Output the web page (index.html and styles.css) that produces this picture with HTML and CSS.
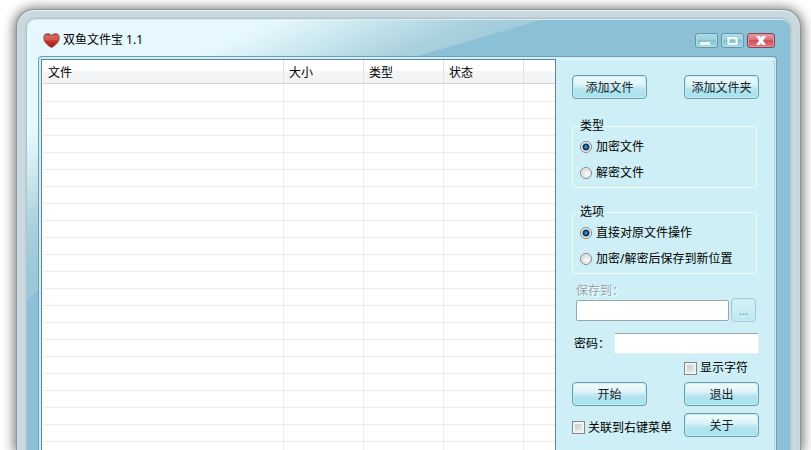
FILE: index.html
```html
<!DOCTYPE html>
<html lang="zh-CN">
  <head>
    <meta charset="UTF-8" />
    <meta name="viewport" content="width=device-width, initial-scale=1.0" />
    <title>双鱼文件宝 1.1</title>
    <link rel="stylesheet" href="styles.css">
  </head>
  <body>
    <div class="window">
      <div class="window-inner">
        <!-- 标题栏 -->
        <div class="title-bar">
          <svg class="logo" viewBox="0 0 17 15">
            <defs>
              <linearGradient id="heart" x1="0" y1="0" x2="0" y2="1">
                <stop offset="0" stop-color="#a04a48" />
                <stop offset="0.2" stop-color="#d0625c" />
                <stop offset="0.5" stop-color="#cf3a33" />
                <stop offset="1" stop-color="#8f1a18" />
              </linearGradient>
            </defs>
            <path d="M8.5 14.700C5.500 12.900.6 9.700.6 4.700.6 2 2 .5 4.500.5c1.800 0 3.200.7 4 1.600.8-.9 2.200-1.600 4-1.600 2.500 0 3.900 1.500 3.900 4.200 0 5-4.900 8.200-7.900 10z" fill="url(#heart)" stroke="#9b5a58" stroke-width=".6" />
            <path d="M2.500 4.500h12M2.500 6.500h12" stroke="#e9908a" stroke-width=".7" stroke-dasharray="1 1" />
          </svg>
          <span class="title">双鱼文件宝 1.1</span>
          <div class="window-buttons">
            <button type="button" aria-label="最小化">
              <svg viewBox="0 0 21 13"><path d="M4 8h10v3H4z" fill="#f4fbfc" /></svg>
            </button>
            <button type="button" aria-label="最大化">
              <svg viewBox="0 0 21 13"><path d="M6.500 4h8v6h-8z" fill="none" stroke="#f4fbfc" stroke-width="2" /></svg>
            </button>
            <button type="button" class="close" aria-label="关闭">
              <svg viewBox="0 0 26 13"><path d="M8 2h4l1 2 1-2h4l-3 4.500 3 4.500h-4l-1-2-1 2H8l3-4.500z" fill="#fff" /></svg>
            </button>
          </div>
        </div>

        <div class="content">
          <!-- 文件列表 -->
          <div class="file-list">
            <table>
              <thead>
                <tr>
                  <th class="col-file">文件</th>
                  <th class="col">大小</th>
                  <th class="col">类型</th>
                  <th class="col">状态</th>
                  <th></th>
                </tr>
              </thead>
              <tbody>
                <tr><td></td><td></td><td></td><td></td><td></td></tr>
                <tr><td></td><td></td><td></td><td></td><td></td></tr>
                <tr><td></td><td></td><td></td><td></td><td></td></tr>
                <tr><td></td><td></td><td></td><td></td><td></td></tr>
                <tr><td></td><td></td><td></td><td></td><td></td></tr>
                <tr><td></td><td></td><td></td><td></td><td></td></tr>
                <tr><td></td><td></td><td></td><td></td><td></td></tr>
                <tr><td></td><td></td><td></td><td></td><td></td></tr>
                <tr><td></td><td></td><td></td><td></td><td></td></tr>
                <tr><td></td><td></td><td></td><td></td><td></td></tr>
                <tr><td></td><td></td><td></td><td></td><td></td></tr>
                <tr><td></td><td></td><td></td><td></td><td></td></tr>
                <tr><td></td><td></td><td></td><td></td><td></td></tr>
                <tr><td></td><td></td><td></td><td></td><td></td></tr>
                <tr><td></td><td></td><td></td><td></td><td></td></tr>
                <tr><td></td><td></td><td></td><td></td><td></td></tr>
                <tr><td></td><td></td><td></td><td></td><td></td></tr>
                <tr><td></td><td></td><td></td><td></td><td></td></tr>
                <tr><td></td><td></td><td></td><td></td><td></td></tr>
                <tr><td></td><td></td><td></td><td></td><td></td></tr>
                <tr><td></td><td></td><td></td><td></td><td></td></tr>
                <tr><td></td><td></td><td></td><td></td><td></td></tr>
              </tbody>
            </table>
          </div>

          <!-- 操作面板 -->
          <form class="panel">
            <div class="row">
              <button type="button" class="btn">添加文件</button>
              <button type="button" class="btn">添加文件夹</button>
            </div>

            <fieldset class="group group-type">
              <legend>类型</legend>
              <label class="option"><input type="radio" name="type" checked />加密文件</label>
              <label class="option"><input type="radio" name="type" />解密文件</label>
            </fieldset>

            <fieldset class="group">
              <legend>选项</legend>
              <label class="option"><input type="radio" name="target" checked />直接对原文件操作</label>
              <label class="option"><input type="radio" name="target" />加密/解密后保存到新位置</label>
            </fieldset>

            <div class="save">
              <label for="save-path">保存到：</label>
              <div class="save-row">
                <input type="text" id="save-path" disabled />
                <button type="button" class="btn btn-browse" disabled>...</button>
              </div>
            </div>

            <div class="password">
              <label for="password">密码：</label>
              <input type="password" id="password" />
            </div>

            <label class="check show-chars"><input type="checkbox" />显示字符</label>

            <div class="row">
              <button type="button" class="btn">开始</button>
              <button type="button" class="btn">退出</button>
            </div>
            <div class="row row-last">
              <label class="check"><input type="checkbox" />关联到右键菜单</label>
              <button type="button" class="btn">关于</button>
            </div>
          </form>
        </div>
      </div>
    </div>
  </body>
</html>
```

FILE: styles.css
```css
* {
  box-sizing: border-box;
}
body {
  display: flex;
  height: 100vh;
  margin: 0;
  padding: 9px 10px 0 16px;
  overflow: hidden;
  background: #fff;
  color: #000;
  font-family: "Noto Sans", "Noto Sans CJK SC", sans-serif;
  font-size: 12px;
  line-height: 18px;
}
button,
input {
  margin: 0;
  font: inherit;
}

/* 窗口外框 */
.window {
  display: flex;
  flex: 1;
  min-width: 0;
  padding: 9px 10px 0;
  border: 1px solid #8b9899;
  border-bottom: 0;
  border-radius: 18px 18px 0 0;
  background: #cad8e0;
  box-shadow: inset 0 1px 1px #eaf5f8, 0 1px 12px 2px rgba(0, 0, 0, 0.55);
}
.window-inner {
  position: relative;
  display: flex;
  flex: 1;
  flex-direction: column;
  min-width: 0;
  padding: 0 13px 0 11px;
  border-top: 1px solid #d9edf3;
  border-radius: 8px 8px 0 0;
  background: #8bc0d6;
  box-shadow: 0 0 2px 1px #a9bac2;
}
/* 左上角的高光 */
.window-inner::before {
  content: "";
  position: absolute;
  inset: 0;
  border-radius: 8px 0 0 0;
  background: linear-gradient(155deg, #e6f8fd 105px, #c6e5ed 150px, #a9d0dd 190px, #9bc9da 230px);
  clip-path: polygon(0 0, 514px 0, 384px 38px, 11px 270px, 0 280px);
}

.title-bar {
  position: relative;
  display: flex;
  align-items: center;
  height: 36px;
  padding: 4px 2px 0 5px;
}
.logo {
  width: 17px;
  height: 15px;
}
.title {
  flex: 1;
  margin-left: 3px;
}
.window-buttons {
  display: flex;
  gap: 3px;
}
.window-buttons button {
  display: flex;
  width: 23px;
  height: 15px;
  padding: 0;
  border: 1px solid #5c98ab;
  border-radius: 3px;
  background: linear-gradient(#aed9e4, #9fcfdb 45%, #84c1cf 50%, #a5dde3);
  box-shadow: inset 0 0 0 1px #b2dfe7;
}
.window-buttons .close {
  width: 28px;
  border-color: #7d4a5a;
  background: linear-gradient(#e3a3aa, #d87078 45%, #cb525a 50%, #e8777c);
  box-shadow: inset 0 0 0 1px #e0959b;
}

.content {
  position: relative;
  display: flex;
  flex: 1;
  min-height: 0;
  padding: 2px 1px 0 2px;
  border: 1px solid #709eb0;
  border-bottom: 0;
  border-radius: 4px 4px 0 0;
  background: #cdeff5;
}

/* 文件列表 */
.file-list {
  flex: 1;
  min-width: 0;
  padding-left: 1px;
  overflow: hidden;
  border: 1px solid #5d8799;
  border-bottom: 0;
  background: #fff;
}
table {
  width: 100%;
  border-collapse: separate;
  border-spacing: 0;
  table-layout: fixed;
}
th {
  height: 24px;
  padding: 3px 0 0 5px;
  border-right: 1px solid #dfe1e2;
  border-bottom: 1px solid #d5d5d5;
  background: linear-gradient(#fff 45%, #f5f6f7 50%, #f1f2f4);
  font-weight: normal;
  text-align: left;
}
td {
  height: 17px;
  padding: 0;
  border-right: 1px solid #ececec;
  border-bottom: 1px solid #ececec;
}
tr:first-child td {
  height: 18px;
}
th:last-child,
td:last-child {
  border-right: 0;
}
.col-file {
  width: 241px;
}
.col {
  width: 80px;
}

/* 操作面板 */
.panel {
  flex: none;
  width: 219px;
  padding: 15px 15px 0 16px;
  border-top: 1px solid #e3f8fa;
  border-right: 1px solid #a7d4e0;
  border-radius: 4px 4px 0 0;
}
.row {
  display: flex;
  align-items: center;
  justify-content: space-between;
}
.btn {
  width: 75px;
  height: 24px;
  padding: 2px 0 0;
  border: 1px solid #6c9bac;
  border-radius: 4px;
  background: linear-gradient(#f2fcfd, #dcf4f8 40%, #b8e3ed 60%, #a0e4ee);
  box-shadow: inset 0 0 1px 1px #c9eef4;
  color: #12242c;
  line-height: 20px;
}
.group {
  height: 71px;
  margin: 0 2px 0 0;
  padding: 3px 7px 0;
  border: 1px solid #f1faf7;
  border-radius: 3px;
}
.group + .group {
  margin-top: 15px;
}
.group-type {
  margin-top: 18px;
}
legend {
  padding: 0;
}
.option {
  display: flex;
  align-items: center;
  gap: 4px;
  height: 18px;
  white-space: nowrap;
}
.option + .option {
  margin-top: 8px;
}
input[type="radio"] {
  appearance: none;
  flex: none;
  width: 12px;
  height: 12px;
  border: 1px solid #7f8b90;
  border-radius: 50%;
  background: radial-gradient(circle at 60% 60%, #fff, #d5d8da 65%);
  box-shadow: inset 0 0 0 1px #f2f2f2;
}
input[type="radio"]:checked {
  background: radial-gradient(circle, #4fb4d8 0, #14507c 2px, #0f2d48 3px, #e8eef0 4px);
}

.save {
  margin-top: 8px;
  padding: 0 3px 0 4px;
  color: #93a5aa;
}
.save label {
  display: block;
  height: 16px;
  text-shadow: 1px 1px 0 #fff;
}
.save-row {
  display: flex;
  align-items: center;
  gap: 2px;
}
input[type="text"],
input[type="password"] {
  flex: 1;
  min-width: 0;
  height: 21px;
  padding: 0 3px;
  border: 1px solid #95aaaf;
  border-radius: 2px;
  background: #fff;
}
.btn-browse {
  width: 25px;
  border-color: #a3c9d3;
  background: linear-gradient(#d6f3f7, #bde8f0);
  color: #6f9faa;
}
.password {
  display: flex;
  align-items: center;
  margin-top: 11px;
  padding-left: 2px;
}
.password label {
  width: 40px;
}
.password input {
  border-color: #95aaaf #e3f3f5 #e3f3f5;
}
.check {
  display: flex;
  align-items: center;
  gap: 3px;
  white-space: nowrap;
}
.show-chars {
  width: max-content;
  margin: 5px 11px 5px auto;
}
input[type="checkbox"] {
  appearance: none;
  flex: none;
  width: 13px;
  height: 13px;
  border: 1px solid #81898c;
  background: linear-gradient(135deg, #bfc4c7, #f3f3f3);
  box-shadow: inset 0 0 0 2px #f2f4f4;
}
.row-last {
  margin-top: 7px;
}
.row-last .check {
  padding-top: 5px;
}
```
